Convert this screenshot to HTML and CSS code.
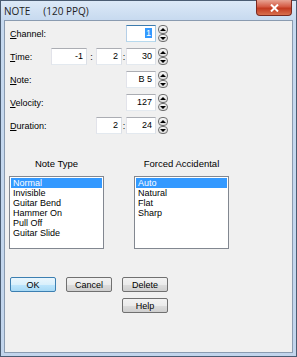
FILE: index.html
```html
<!DOCTYPE html>
<html lang="en">
<head>
    <meta charset="UTF-8">
    <title>NOTE (120 PPQ)</title>
    <link rel="stylesheet" href="styles.css">
</head>
<body>
    <div class="window">
        <!-- Barre de titre -->
        <div class="titlebar">
            <span class="title">NOTE&nbsp;&nbsp;&nbsp;&nbsp;&nbsp;(120 PPQ)</span>
            <button class="close">
                <svg width="9" height="8" viewBox="0 0 9 8">
                    <path d="M1 0.5 L8 7.5 M8 0.5 L1 7.5" stroke="#fff" stroke-width="2"/>
                </svg>
            </button>
        </div>

        <div class="client">
            <div class="fields">
                <div class="row">
                    <label><u>C</u>hannel:</label>
                    <div class="inputs">
                        <span class="box box-focus w30"><span class="sel">1</span></span>
                        <span class="spin"><i class="up"></i><i class="down"></i></span>
                    </div>
                </div>
                <div class="row">
                    <label><u>T</u>ime:</label>
                    <div class="inputs">
                        <span class="box w35">-1</span>
                        <span class="colon wide">:</span>
                        <span class="box w25">2</span>
                        <span class="colon">:</span>
                        <span class="box w30">30</span>
                        <span class="spin"><i class="up"></i><i class="down"></i></span>
                    </div>
                </div>
                <div class="row">
                    <label><u>N</u>ote:</label>
                    <div class="inputs">
                        <span class="box w30">B 5</span>
                        <span class="spin"><i class="up"></i><i class="down"></i></span>
                    </div>
                </div>
                <div class="row">
                    <label><u>V</u>elocity:</label>
                    <div class="inputs">
                        <span class="box w30">127</span>
                        <span class="spin"><i class="up"></i><i class="down"></i></span>
                    </div>
                </div>
                <div class="row">
                    <label><u>D</u>uration:</label>
                    <div class="inputs">
                        <span class="box w25">2</span>
                        <span class="colon">:</span>
                        <span class="box w30">24</span>
                        <span class="spin"><i class="up"></i><i class="down"></i></span>
                    </div>
                </div>
            </div>

            <div class="lists">
                <div class="group">
                    <div class="group-title">Note Type</div>
                    <ul class="listbox">
                        <li class="selected">Normal</li>
                        <li>Invisible</li>
                        <li>Guitar Bend</li>
                        <li>Hammer On</li>
                        <li>Pull Off</li>
                        <li>Guitar Slide</li>
                    </ul>
                </div>
                <div class="group">
                    <div class="group-title">Forced Accidental</div>
                    <ul class="listbox">
                        <li class="selected">Auto</li>
                        <li>Natural</li>
                        <li>Flat</li>
                        <li>Sharp</li>
                    </ul>
                </div>
            </div>

            <div class="buttons">
                <button class="btn btn-default">OK</button>
                <button class="btn">Cancel</button>
                <button class="btn">Delete</button>
                <button class="btn btn-help">Help</button>
            </div>
        </div>
    </div>
</body>
</html>
```

FILE: styles.css
```css
/* Fenêtre style Windows 7 */
body {
    margin: 0;
    font-family: "Liberation Sans", Arial, sans-serif;
    font-size: 9px;
    color: #000;
    background: #fff;
}

.window {
    width: 297px;
    height: 357px;
    box-sizing: border-box;
    border: 1px solid #4a5c72;
    background: linear-gradient(to bottom, #dce9f7, #c6d9ef 20px, #c2d5ec);
    display: flex;
    flex-direction: column;
}

.titlebar {
    height: 19px;
    display: flex;
    align-items: flex-start;
    justify-content: space-between;
}

.title {
    font-family: "Open Sans", "Liberation Sans", sans-serif;
    font-size: 10px;
    color: #1e1e1e;
    padding: 3px 0 0 3px;
    white-space: pre;
}

.close {
    width: 36px;
    height: 16px;
    margin: -1px 4px 0 0;
    padding: 0;
    border: 1px solid #7a2a20;
    border-top: none;
    border-radius: 0 0 4px 4px;
    background: linear-gradient(to bottom, #e8a494, #d45a43 45%, #c23a20 55%, #d8704e);
    display: flex;
    align-items: center;
    justify-content: center;
}

.client {
    flex: 1;
    margin: 0 3px 3px 3px;
    border: 1px solid #8a9bb0;
    background: #f0f0f0;
    padding: 4px 0 0 5px;
}

/* Champs */
.fields {
    width: 158px;
}

.row {
    display: flex;
    justify-content: space-between;
    align-items: center;
    height: 17px;
    margin-bottom: 6px;
}

.inputs {
    display: flex;
    align-items: center;
}

.box {
    height: 17px;
    box-sizing: border-box;
    border: 1px solid #abadb3;
    border-color: #abadb3 #dbdfe6 #e3e9ef #e2e3ea;
    background: #fff;
    text-align: right;
    padding: 0 3px;
    line-height: 15px;
}

.box-focus {
    border-color: #3d7bad #a4c9e3 #b7d9ed #b5cfe7;
}

.sel {
    background: #3399ff;
    color: #fff;
    padding: 0 1px;
}

.w25 { width: 26px; }
.w30 { width: 30px; }
.w35 { width: 36px; }

.colon {
    width: 4px;
    text-align: center;
}

.colon.wide {
    width: 9px;
}

.spin {
    width: 10px;
    height: 17px;
    margin-left: 2px;
    display: flex;
    flex-direction: column;
}

.spin i {
    flex: 1;
    border: 1px solid #707070;
    border-radius: 4px;
    background: linear-gradient(to bottom, #f6f6f6, #dcdcdc);
    position: relative;
}

.spin i::after {
    content: "";
    position: absolute;
    left: 1px;
    border-left: 3px solid transparent;
    border-right: 3px solid transparent;
}

.spin .up::after {
    top: 2px;
    border-bottom: 3px solid #000;
}

.spin .down::after {
    top: 2px;
    border-top: 3px solid #000;
}

/* Listes */
.lists {
    display: flex;
    gap: 30px;
    margin: 24px 0 0 -1px;
}

.group {
    width: 95px;
}

.group-title {
    text-align: center;
    font-size: 9.5px;
    margin-bottom: 7px;
}

.listbox {
    list-style: none;
    margin: 0;
    padding: 1px;
    height: 73px;
    box-sizing: border-box;
    border: 1px solid #828790;
    background: #fff;
}

.listbox li {
    height: 10px;
    line-height: 10px;
    padding-left: 2px;
}

.listbox li.selected {
    background: #3399ff;
    color: #fff;
}

/* Boutons */
.buttons {
    display: grid;
    grid-template-columns: 46px 46px 46px;
    column-gap: 10px;
    row-gap: 6px;
    margin-top: 28px;
}

.btn {
    height: 15px;
    padding: 0;
    font-family: "Liberation Sans", Arial, sans-serif;
    font-size: 9px;
    color: #000;
    border: 1px solid #707070;
    border-radius: 2px;
    background: linear-gradient(to bottom, #f2f2f2, #ebebeb 50%, #dddddd 51%, #cfcfcf);
}

.btn-default {
    border-color: #3c7fb1;
    background: linear-gradient(to bottom, #eaf6fd, #d9f0fc 50%, #bee6fd 51%, #a7d9f5);
}

.btn-help {
    grid-column: 3;
}
```
